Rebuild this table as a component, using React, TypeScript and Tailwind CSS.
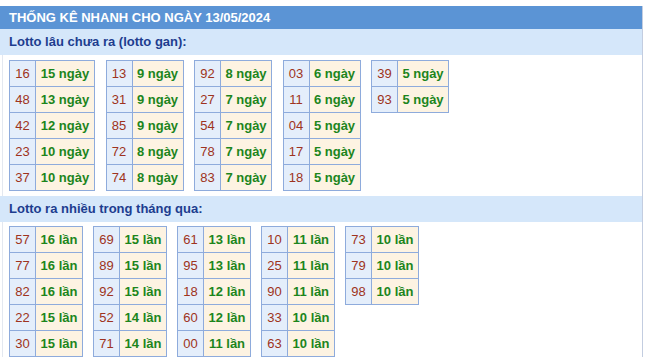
import React from "react";

type Item = [string, string];

const gan: Item[][] = [
  [["16", "15 ngày"], ["48", "13 ngày"], ["42", "12 ngày"], ["23", "10 ngày"], ["37", "10 ngày"]],
  [["13", "9 ngày"], ["31", "9 ngày"], ["85", "9 ngày"], ["72", "8 ngày"], ["74", "8 ngày"]],
  [["92", "8 ngày"], ["27", "7 ngày"], ["54", "7 ngày"], ["78", "7 ngày"], ["83", "7 ngày"]],
  [["03", "6 ngày"], ["11", "6 ngày"], ["04", "5 ngày"], ["17", "5 ngày"], ["18", "5 ngày"]],
  [["39", "5 ngày"], ["93", "5 ngày"]],
];

const nhieu: Item[][] = [
  [["57", "16 lần"], ["77", "16 lần"], ["82", "16 lần"], ["22", "15 lần"], ["30", "15 lần"]],
  [["69", "15 lần"], ["89", "15 lần"], ["92", "15 lần"], ["52", "14 lần"], ["71", "14 lần"]],
  [["61", "13 lần"], ["95", "13 lần"], ["18", "12 lần"], ["60", "12 lần"], ["00", "11 lần"]],
  [["10", "11 lần"], ["25", "11 lần"], ["90", "11 lần"], ["33", "10 lần"], ["63", "10 lần"]],
  [["73", "10 lần"], ["79", "10 lần"], ["98", "10 lần"]],
];

function Table({ rows, textW }: { rows: Item[]; textW: string }) {
  return (
    <div className="flex flex-col border-r border-b border-[#8eabdc] self-start">
      {rows.map(([n, t], i) => (
        <div key={i} className="flex h-[26px]">
          <div className="w-[26px] border-l border-t border-[#8eabdc] bg-[#e4eefb] text-[#9e3320] flex items-center justify-center text-[13px]">
            {n}
          </div>
          <div
            className={
              textW +
              " border-l border-t border-[#8eabdc] bg-[#fdf3e2] text-[#1c851c] font-bold flex items-center justify-center text-[13px]"
            }
          >
            {t}
          </div>
        </div>
      ))}
    </div>
  );
}

export default function App() {
  return (
    <div
      className="w-[649px] h-[357px] overflow-hidden bg-white pt-[6px]"
      style={{ fontFamily: '"Liberation Sans", Arial, sans-serif' }}
    >
      <div className="w-[643px] border-r border-[#c3cde0] h-[351px]">
        <div className="h-[23px] bg-[#5b94d5] text-white font-bold text-[13px] flex items-center pl-[9px]">
          THỐNG KÊ NHANH CHO NGÀY 13/05/2024
        </div>
        <div className="h-[26px] bg-[#d5e7fa] text-[#1d3d8f] font-bold text-[13px] flex items-center pl-[9px]">
          Lotto lâu chưa ra (lotto gan):
        </div>
        <div className="ml-[2px] border-l border-[#e3e8f0] pl-[6px] pt-[5px] pb-[5px] flex gap-[10.5px] h-[141px]">
          {gan.map((rows, i) => (
            <Table key={i} rows={rows} textW={i === 0 ? "w-[59px]" : "w-[51px]"} />
          ))}
        </div>
        <div className="h-[26px] bg-[#d5e7fa] text-[#1d3d8f] font-bold text-[13px] flex items-center pl-[9px]">
          Lotto ra nhiều trong tháng qua:
        </div>
        <div className="ml-[2px] border-l border-[#e3e8f0] pl-[6px] pt-[4px] flex gap-[10px] h-[140px]">
          {nhieu.map((rows, i) => (
            <Table key={i} rows={rows} textW="w-[47px]" />
          ))}
        </div>
      </div>
    </div>
  );
}
